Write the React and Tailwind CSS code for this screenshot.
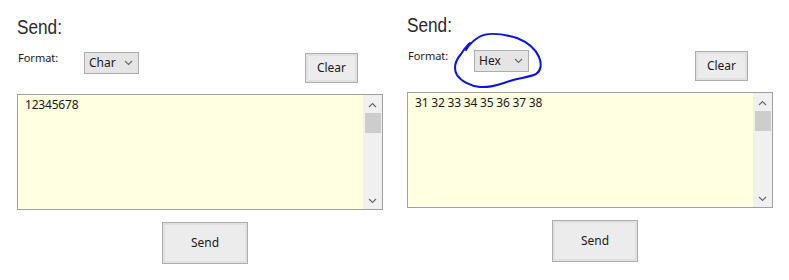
import React from "react";

const ui = { fontFamily: '"Noto Sans", "Open Sans", sans-serif' };

function Chevron({ up }) {
  return (
    <svg width="9" height="6" viewBox="0 0 9 6" className="block">
      <path d={up ? "M1 5 L4.5 1.5 L8 5" : "M1 1 L4.5 4.5 L8 1"} fill="none" stroke="#6a6a6a" strokeWidth="1.2" />
    </svg>
  );
}

function WinButton({ label, className }) {
  return (
    <div className={`border border-[#adadad] bg-[#e1e1e1] p-[2px] ${className}`}>
      <div className="w-full h-full bg-[#ececec] flex items-center justify-center text-[12px] text-[#1a1a1a]" style={ui}>
        {label}
      </div>
    </div>
  );
}

function Panel({ value, text, top }) {
  return (
    <div className={`w-[366px] flex flex-col ${top}`}>
      <div className="h-[22px] flex items-end mt-[13px]">
        <span
          className="inline-block text-[20px] leading-none text-[#2a2a2a] origin-left scale-x-[0.86]"
          style={{ fontFamily: '"Liberation Sans", Arial, sans-serif' }}
        >
          Send:
        </span>
      </div>
      <div className="flex items-start mt-[15px] h-[31px]">
        <div className="w-[67px] pl-[1px] text-[11px] leading-[16px] text-[#1a1a1a] mt-[-2px]" style={ui}>
          Format:
        </div>
        <div className="w-[55px] h-[22px] border border-[#adadad] bg-[#e5e5e5] flex items-center justify-between pl-[4px] pr-[5px]">
          <span className="text-[12px] text-[#1a1a1a]" style={ui}>{value}</span>
          <Chevron />
        </div>
        <div className="flex-1" />
        <WinButton label="Clear" className="w-[53px] h-[30px] mt-[1px] mr-[25px]" />
      </div>
      <div className="mt-[11px] h-[116px] border border-[#a0a0a0] bg-[#ffffe1] flex">
        <div className="flex-1 pl-[7px] pt-[2px] text-[12px] leading-[16px] text-[#1a1a1a] tracking-[-0.2px]" style={ui}>
          {text}
        </div>
        <div className="w-[19px] bg-[#f0f0f0] flex flex-col items-center">
          <div className="h-[17px] flex items-center justify-center pt-[2px]"><Chevron up /></div>
          <div className="w-[16px] h-[20px] bg-[#cdcdcd] mt-[1px]" />
          <div className="flex-1" />
          <div className="h-[17px] flex items-center justify-center"><Chevron /></div>
        </div>
      </div>
      <div className="flex justify-start pl-[145px] mt-[12px]">
        <WinButton label="Send" className="w-[86px] h-[42px]" />
      </div>
    </div>
  );
}

export default function App() {
  return (
    <div className="relative w-[789px] h-[280px] bg-white overflow-hidden">
      <div className="flex gap-[24px] pl-[17px]">
        <Panel value="Char" text="12345678" top="mt-[2px]" />
        <Panel value="Hex" text="31 32 33 34 35 36 37 38" top="mt-0" />
      </div>
      <svg className="absolute left-0 top-0 pointer-events-none" width="789" height="280">
        <path
          d="M466 50 C470 43, 474 40, 479 37 C486 33, 500 33, 517 38 C527 42, 535 48, 539 57 C542 64, 541 71, 536 74 C530 77, 520 78, 510 81 C500 84, 492 88, 480 87 C470 86, 461 81, 457 75 C453 68, 456 60, 461 54 C464 50, 466 46, 470 43"
          fill="none"
          stroke="#0a14e6"
          strokeWidth="2"
          strokeLinecap="round"
        />
      </svg>
    </div>
  );
}
